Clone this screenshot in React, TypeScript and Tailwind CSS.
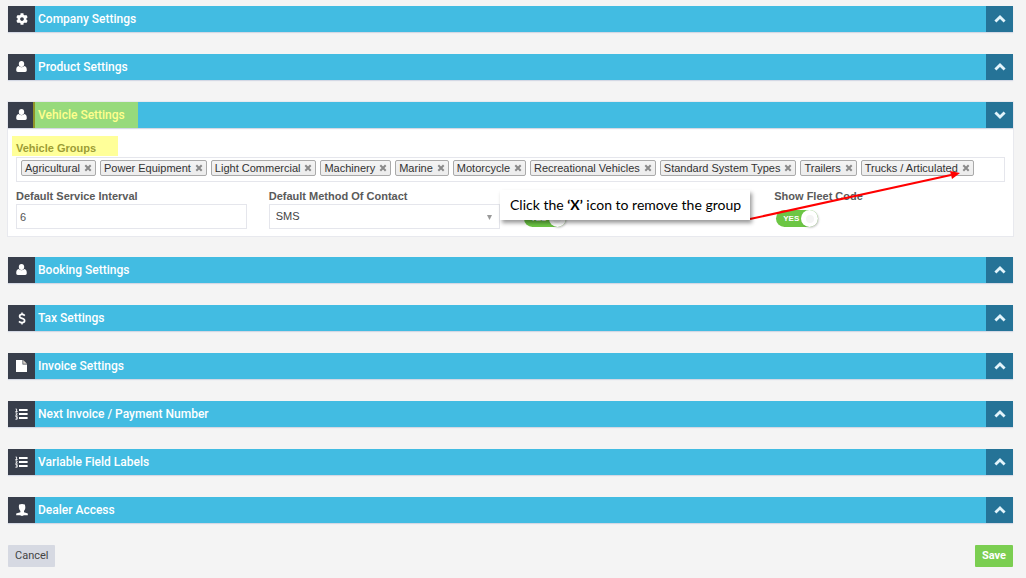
import type { ReactNode } from "react";
import { FaCog } from "react-icons/fa";

function UserIcon() {
  return (
    <svg viewBox="0 0 11 12" className="h-[12px] w-[11px]" fill="currentColor" aria-hidden="true">
      <ellipse cx="5.5" cy="3" rx="2.7" ry="3" />
      <path d="M2.6 5Q5.5 7.6 8.4 5Q10.8 5.6 10.8 9.2Q10.8 11 9.2 11H1.8Q0.2 11 0.2 9.2Q0.2 5.6 2.6 5z" />
    </svg>
  );
}

function DollarIcon() {
  return (
    <svg viewBox="0 0 8 13" className="h-[13px] w-[8px]" fill="none" stroke="currentColor" aria-hidden="true">
      <path d="M6.8 3.6Q5.6 2.4 4 2.4Q1.6 2.4 1.6 4.2Q1.6 5.8 4 6.4Q6.6 7 6.6 8.8Q6.6 10.6 4 10.6Q2.2 10.6 1 9.3" strokeWidth="1.7" />
      <path d="M4 0.4V2.4M4 10.6V12.6" strokeWidth="1.4" />
    </svg>
  );
}

function ListIcon() {
  return (
    <svg viewBox="0 0 13 12" className="h-[12px] w-[13px]" fill="none" stroke="currentColor" aria-hidden="true">
      <path d="M4 2H12.6M4 6H12.6M4 10H12.6" strokeWidth="2" />
      <path d="M0.6 1H1.6V3.4M0.4 3.5H2.6M0.4 4.9H2V6L0.6 7.2H2.6M0.4 8.6H2.2V11.2H0.4M1 9.9H2.2" strokeWidth="0.9" />
    </svg>
  );
}

function FileIcon() {
  return (
    <svg viewBox="0 0 11 12" className="h-[12px] w-[11px]" aria-hidden="true">
      <path d="M0 0h6.5v4.5H11V12H0z" fill="#fff" />
      <path d="M7.2 0L11 3.8H7.2z" fill="#d9d3cb" />
    </svg>
  );
}

function DealerIcon() {
  return (
    <svg viewBox="0 0 12 12" className="h-[12px] w-[12px]" fill="currentColor" aria-hidden="true">
      <path d="M3.2 0.6Q6 -0.6 8.8 0.6Q9.8 3.6 8.9 5.4L8 7V8.2L11.8 9.6V11.2H8L6 12L4 11.2H0.2V9.6L4.4 8.2V7L3.4 5.4Q2.4 3 3.2 0.6z" />
    </svg>
  );
}

function Chevron({ down }: { down: boolean }) {
  return (
    <svg viewBox="0 0 12 8" className="h-[8px] w-[12px]" fill="none" stroke="currentColor" strokeWidth="2.8" aria-hidden="true">
      <path d={down ? "M1.4 1.4L6 6L10.6 1.4" : "M1.4 6.6L6 2L10.6 6.6"} />
    </svg>
  );
}

function RemoveIcon() {
  return (
    <svg viewBox="0 0 8 8" className="h-[8px] w-[8px]" fill="none" stroke="currentColor" strokeWidth="2" aria-hidden="true">
      <path d="M1.3 1.3L6.7 6.7M6.7 1.3L1.3 6.7" />
    </svg>
  );
}

type BarProps = { title: string; icon: ReactNode; open?: boolean };

function Bar({ title, icon, open = false }: BarProps) {
  return (
    <h2 className="shadow-[0_1px_1px_#d4d8e4]">
      <button type="button" aria-expanded={open} className="flex h-[26px] w-full items-stretch bg-[#42bce2] text-left text-white">
        <span className="flex w-[27px] shrink-0 items-center justify-center bg-[#383e4b] text-[12px]">{icon}</span>
        <span className="relative flex grow items-center pl-[3px] font-[Roboto,sans-serif] text-[12px] font-medium">
          <span className="pb-px">{title}</span>
          {open && <span className="absolute inset-y-0 -left-0.5 w-[105px] bg-[#ffff00]/45" />}
        </span>
        <span className="flex w-[27px] shrink-0 items-center justify-center bg-[#257397] text-[#e2f4fb]">
          <Chevron down={open} />
        </span>
      </button>
    </h2>
  );
}

const groups = [
  "Agricultural",
  "Power Equipment",
  "Light Commercial",
  "Machinery",
  "Marine",
  "Motorcycle",
  "Recreational Vehicles",
  "Standard System Types",
  "Trailers",
  "Trucks / Articulated",
];

const lower: BarProps[] = [
  { title: "Booking Settings", icon: <UserIcon /> },
  { title: "Tax Settings", icon: <DollarIcon /> },
  { title: "Invoice Settings", icon: <FileIcon /> },
  { title: "Next Invoice / Payment Number", icon: <ListIcon /> },
  { title: "Variable Field Labels", icon: <ListIcon /> },
  { title: "Dealer Access", icon: <DealerIcon /> },
];

function Toggle({ label }: { label: string }) {
  return (
    <label className="relative mt-1.5 ml-0.5 flex h-[17px] w-[42px] items-center rounded-full bg-[#6cc644] pl-[7px] text-[8px] font-bold text-white">
      <input type="checkbox" defaultChecked aria-label={label} className="absolute inset-0 appearance-none" />
      YES
      <span className="absolute right-0 flex h-[17px] w-[17px] items-center justify-center rounded-full bg-white shadow-[1px_1px_2px_#00000033]">
        <span className="h-2 w-2 rounded-full bg-[#f4f4f4]" />
      </span>
    </label>
  );
}

const labelText = "block text-[11px] leading-[15px] font-bold text-[#5a5a5a]";

export default function App() {
  return (
    <main className="min-h-screen bg-[#f4f4f4] pt-1.5 pr-[13px] pb-3 pl-2 font-['Liberation_Sans',Arial,sans-serif] text-[11px] text-[#444444]">
      <div className="flex flex-col gap-[22px]">
        <Bar title="Company Settings" icon={<FaCog />} />
        <Bar title="Product Settings" icon={<UserIcon />} />
        <section className="relative -mb-px bg-white shadow-[0_0_0_1px_#e8e9ee]">
          <Bar title="Vehicle Settings" icon={<UserIcon />} open />
          <div className="px-2 pt-[13px] pb-[7px]">
            <div className="relative pb-px">
              <span className={labelText}>Vehicle Groups</span>
              <span className="absolute -top-[5px] -left-1 h-5 w-[106px] bg-[#ffff00]/40" />
            </div>
            <ul className="flex h-[25px] items-center gap-1 border border-[#e5e6ec] pb-[3px] pl-1">
              {groups.map((g) => (
                <li
                  key={g}
                  className="flex h-4 shrink-0 items-center gap-1 rounded-[2px] border border-[#aaaaaa] bg-linear-to-b from-[#f4f4f4] to-[#ececec] px-[3px] leading-3 whitespace-nowrap text-[#333333]"
                >
                  {g}
                  <button type="button" aria-label={`Remove ${g}`} className="text-[#8a8a8a]">
                    <RemoveIcon />
                  </button>
                </li>
              ))}
            </ul>
            <div className="mt-[7px] grid grid-cols-4 gap-x-[22px]">
              <div>
                <label htmlFor="interval" className={labelText}>Default Service Interval</label>
                <input id="interval" defaultValue="6" className="h-[25px] w-full border border-[#e5e6ec] bg-white px-[3px] text-[#555555]" />
              </div>
              <div>
                <label htmlFor="contact" className={labelText}>Default Method Of Contact</label>
                <div className="relative">
                  <select id="contact" className="h-[25px] w-full appearance-none border border-[#e5e6ec] bg-white px-1.5 text-[#444444]">
                    <option>SMS</option>
                  </select>
                  <svg viewBox="0 0 5 5" className="pointer-events-none absolute top-[11px] right-2 h-[5px] w-[5px]" fill="#999999" aria-hidden="true">
                    <path d="M0 0h5L2.5 5z" />
                  </svg>
                </div>
              </div>
              <div className="pt-[15px]">
                <Toggle label="Enabled" />
              </div>
              <div>
                <span className={labelText}>Show Fleet Code</span>
                <Toggle label="Show Fleet Code" />
              </div>
            </div>
          </div>
          <svg className="pointer-events-none absolute top-[65px] right-[50px] h-[54px] w-[216px]" viewBox="0 0 216 54" aria-hidden="true">
            <path d="M3 52L204 8" stroke="#f00" strokeWidth="2" fill="none" />
            <path d="M203 4L213 6L205 12z" fill="#f00" />
          </svg>
          <div role="note" className="absolute top-[88px] right-[263px] flex h-[30px] w-[250px] items-center bg-white pb-0.5 pl-[10px] font-[Lato,sans-serif] text-[14px] whitespace-nowrap text-black shadow-[2px_3px_4px_#00000066]">
            <p>Click the <b>‘X’</b> icon to remove the group</p>
          </div>
        </section>
        {lower.map((b) => (
          <Bar key={b.title} {...b} />
        ))}
        <div className="flex justify-between">
          <button type="button" className="h-[22px] rounded-[1px] bg-[#d6d9e2] px-[7px] font-[Roboto,sans-serif]">Cancel</button>
          <button type="button" className="h-[22px] rounded-[1px] bg-[#7bce51] px-[7px] font-[Roboto,sans-serif] font-bold text-white">Save</button>
        </div>
      </div>
    </main>
  );
}
